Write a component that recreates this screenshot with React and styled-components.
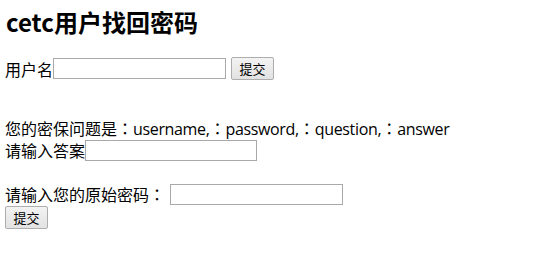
import React from "react";
import styled, { createGlobalStyle } from "styled-components";

const Global = createGlobalStyle`
  html, body { margin: 0; padding: 0; background: #fff; }
  body {
    padding: 0 5px;
    font-family: "Open Sans", "Noto Sans CJK SC", sans-serif;
    font-size: 16px;
    color: #000;
  }
`;

const Page = styled.div`
  display: flex;
  flex-direction: column;
`;

const Title = styled.h2`
  margin: 6px 0 0 1px;
  height: 32px;
  line-height: 32px;
  font-size: 24px;
  font-weight: 700;
  font-family: "Noto Sans CJK SC", sans-serif;
`;

const Row = styled.div`
  display: flex;
  align-items: center;
  height: ${(p) => p.$h || 23}px;
  margin-top: ${(p) => p.$mt || 0}px;
  line-height: 22px;
  white-space: nowrap;
`;

const Label = styled.span`
  font-family: "Noto Sans CJK SC", sans-serif;
  font-size: 16px;
`;

const Text = styled.span`
  font-size: 16px;
  letter-spacing: -0.35px;
`;

const Colon = styled.span`
  font-family: "Noto Sans CJK TC", sans-serif;
  letter-spacing: 0;
`;

const Input = styled.input`
  box-sizing: border-box;
  width: ${(p) => p.$w || 173}px;
  height: 21px;
  margin: 0 0 0 ${(p) => p.$ml || 0}px;
  border: 1px solid #a9a9a9;
  padding: 1px 2px;
  background: #fff;
  font-size: 13px;
  outline: none;
`;

const Button = styled.button`
  box-sizing: border-box;
  width: 43px;
  height: 23px;
  margin-left: ${(p) => p.$ml || 0}px;
  padding: 0;
  border: 1px solid #adadad;
  border-radius: 2px;
  background: linear-gradient(#f3f3f3, #e2e2e2);
  font-family: "Noto Sans CJK SC", sans-serif;
  font-size: 13px;
  color: #000;
`;

export default function App() {
  return (
    <>
      <Global />
      <Page>
        <Title>cetc用户找回密码</Title>
        <Row $mt={19}>
          <Label>用户名</Label>
          <Input $w={173} />
          <Button $ml={5}>提交</Button>
        </Row>
        <Row $mt={37} $h={22}>
          <Label>您的密保问题是<Colon>：</Colon></Label>
          <Text>
            username,<Colon>：</Colon>password,<Colon>：</Colon>question,<Colon>：</Colon>answer
          </Text>
        </Row>
        <Row $h={22}>
          <Label>请输入答案</Label>
          <Input $w={172} />
        </Row>
        <Row $mt={22} $h={22}>
          <Label>请输入您的原始密码<Colon>：</Colon></Label>
          <Input $w={173} $ml={5} />
        </Row>
        <Row $mt={1}>
          <Button>提交</Button>
        </Row>
      </Page>
    </>
  );
}
